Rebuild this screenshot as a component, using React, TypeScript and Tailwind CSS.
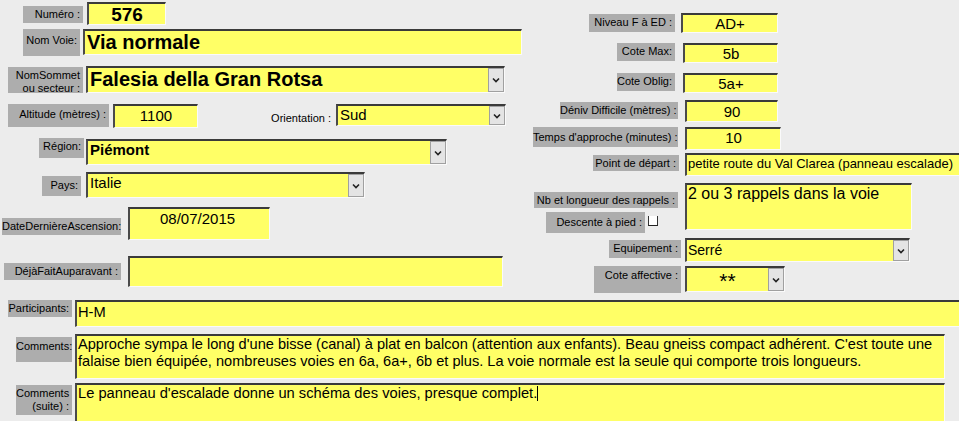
import React from "react";

function Label({ className, children }: { className: string; children: React.ReactNode }) {
  return (
    <div
      className={`shrink-0 bg-[#adadad] text-right whitespace-nowrap text-[11px] leading-[13px] pr-[3px] pt-[2px] text-black ${className}`}
    >
      {children}
    </div>
  );
}

function DropBtn() {
  return (
    <div className="shrink-0 w-[16px] h-full flex items-center justify-center bg-[#e4e4e4] border border-[#a0a0a0]">
      <svg width="8" height="6" viewBox="0 0 8 6">
        <path d="M1 1.5 L4 4.5 L7 1.5" stroke="#222" strokeWidth="1.6" fill="none" />
      </svg>
    </div>
  );
}

function Field({
  className,
  children,
  dropdown,
  inner,
}: {
  className: string;
  children?: React.ReactNode;
  dropdown?: boolean;
  inner?: string;
}) {
  return (
    <div
      className={`shrink-0 flex bg-[#ffff66] border-t-2 border-l-2 border-t-[#3a3a3a] border-l-[#4a4a4a] border-b border-r border-b-[#fafafa] border-r-[#fafafa] ${className}`}
    >
      <div className={`flex-1 min-w-0 overflow-hidden whitespace-nowrap text-black ${inner ?? ""}`}>{children}</div>
      {dropdown && <DropBtn />}
    </div>
  );
}

export default function App() {
  return (
    <div className="w-[959px] h-[421px] overflow-hidden bg-[#ececec] font-['Liberation_Sans',Arial,sans-serif]">
      {/* top part: two columns */}
      <div className="flex h-[300px]">
        {/* left column */}
        <div className="w-[525px] shrink-0 flex flex-col">
          <div className="flex mt-[2px] h-[23px]">
            <Label className="ml-[23px] mt-[4px] w-[60px] h-[17px]">Numéro :</Label>
            <Field className="ml-[4px] w-[79px] h-[23px]" inner="text-center text-[19px] font-bold leading-[20px] pt-[1px]">
              576
            </Field>
          </div>
          <div className="flex mt-[4px] h-[27px]">
            <Label className="ml-[23px] w-[57px] h-[27px] pt-[5px]">Nom Voie:</Label>
            <Field className="ml-[3px] w-[439px] h-[26px]" inner="pl-[2px] text-[20px] font-bold leading-[22px]">
              Via normale
            </Field>
          </div>
          <div className="flex mt-[10px] h-[27px]">
            <Label className="ml-[8px] mt-[1px] w-[75px] h-[26px] leading-[11px] pt-[1px]">
              NomSommet
              <br />
              ou secteur :
            </Label>
            <Field dropdown className="ml-[3px] w-[419px] h-[27px]" inner="pl-[2px] text-[20px] font-bold leading-[23px]">
              Falesia della Gran Rotsa
            </Field>
          </div>
          <div className="flex mt-[11px] h-[24px]">
            <Label className="ml-[8px] w-[101px] h-[23px] pt-[4px]">Altitude (mètres) :</Label>
            <Field className="ml-[4px] w-[85px] h-[24px]" inner="text-center text-[15px] leading-[20px]">
              1100
            </Field>
            <div className="w-[138px] shrink-0 text-right text-[11px] pt-[6px] pr-[5px]">Orientation :</div>
            <Field dropdown className="w-[170px] h-[22px]" inner="pl-[2px] text-[15px] leading-[18px]">
              Sud
            </Field>
          </div>
          <div className="flex mt-[10px] h-[27px]">
            <Label className="ml-[39px] w-[45px] h-[20px]">Région:</Label>
            <Field dropdown className="ml-[2px] mt-[1px] w-[361px] h-[26px]" inner="pl-[2px] text-[15px] font-bold leading-[18px]">
              Piémont
            </Field>
          </div>
          <div className="flex mt-[7px] h-[26px]">
            <Label className="ml-[42px] mt-[4px] w-[39px] h-[20px] pt-[3px]">Pays:</Label>
            <Field dropdown className="ml-[5px] w-[279px] h-[26px]" inner="pl-[2px] text-[15px] leading-[18px]">
              Italie
            </Field>
          </div>
          <div className="flex mt-[9px] h-[33px]">
            <Label className="ml-[2px] mt-[11px] w-[119px] h-[17px]">DateDernièreAscension:</Label>
            <Field className="ml-[7px] w-[142px] h-[33px]" inner="pl-[30px] text-[15px] leading-[18px] pt-[1px]">
              08/07/2015
            </Field>
          </div>
          <div className="flex mt-[16px] h-[31px]">
            <Label className="ml-[4px] mt-[7px] w-[117px] h-[17px]">DéjàFaitAuparavant :</Label>
            <Field className="ml-[7px] w-[375px] h-[31px]" />
          </div>
        </div>

        {/* right column */}
        <div className="flex-1 flex flex-col">
          <div className="flex mt-[13px] h-[20px]">
            <Label className="ml-[64px] mt-[1px] w-[86px] h-[18px]">Niveau F à ED :</Label>
            <Field className="ml-[6px] w-[97px] h-[20px]" inner="text-center text-[15px] leading-[17px]">
              AD+
            </Field>
          </div>
          <div className="flex mt-[10px] h-[20px]">
            <Label className="ml-[92px] w-[58px] h-[18px]">Cote Max:</Label>
            <Field className="ml-[8px] w-[95px] h-[20px]" inner="text-center text-[15px] leading-[17px]">
              5b
            </Field>
          </div>
          <div className="flex mt-[10px] h-[20px]">
            <Label className="ml-[92px] w-[58px] h-[18px]">Cote Oblig:</Label>
            <Field className="ml-[8px] w-[95px] h-[20px]" inner="text-center text-[15px] leading-[17px]">
              5a+
            </Field>
          </div>
          <div className="flex mt-[7px] h-[22px]">
            <Label className="ml-[35px] mt-[2px] w-[118px] h-[17px] pt-[1px]">Déniv Difficile (mètres) :</Label>
            <Field className="ml-[7px] w-[93px] h-[22px]" inner="text-center text-[15px] leading-[19px]">
              90
            </Field>
          </div>
          <div className="flex mt-[5px] h-[23px]">
            <Label className="ml-[8px] w-[145px] h-[20px] pt-[4px] pr-[2px]">Temps d'approche (minutes) :</Label>
            <Field className="ml-[7px] w-[96px] h-[23px]" inner="text-center text-[15px] leading-[17px]">
              10
            </Field>
          </div>
          <div className="flex mt-[3px] h-[23px]">
            <Label className="ml-[68px] mt-[2px] w-[86px] h-[16px] pt-[1px]">Point de départ :</Label>
            <Field className="ml-[6px] w-[290px] h-[23px]" inner="pl-[1px] text-[13px] leading-[18px]">
              petite route du Val Clarea (panneau escalade)
            </Field>
          </div>
          <div className="flex mt-[7px] h-[47px]">
            <div className="w-[153px] shrink-0 flex flex-col">
              <Label className="ml-[9px] mt-[9px] w-[144px] h-[16px] pt-[2px]">Nb et longueur des rappels :</Label>
              <div className="flex mt-[4px]">
                <Label className="ml-[21px] w-[99px] h-[21px] pt-[4px]">Descente à pied :</Label>
                <div className="ml-[3px] mt-[4px] w-[10px] h-[10px] bg-white border-l border-b border-r border-l-[#333] border-b-[#222] border-r-[#333]" />
              </div>
            </div>
            <Field className="ml-[7px] w-[227px] h-[47px]" inner="pl-[1px] text-[16px] leading-[17px]">
              2 ou 3 rappels dans la voie
            </Field>
          </div>
          <div className="flex mt-[8px] h-[24px]">
            <Label className="ml-[84px] mt-[2px] w-[72px] h-[18px] pt-[2px]">Equipement :</Label>
            <Field dropdown className="ml-[4px] w-[225px] h-[24px]" inner="pl-[1px] text-[14px] leading-[20px]">
              Serré
            </Field>
          </div>
          <div className="flex mt-[4px] h-[27px]">
            <Label className="ml-[69px] w-[87px] h-[27px] pt-[3px]">Cote affective :</Label>
            <Field dropdown className="ml-[4px] w-[100px] h-[26px]" inner="text-center text-[21px] leading-[24px] pt-[1px]">
              **
            </Field>
          </div>
        </div>
      </div>

      {/* bottom rows */}
      <div className="flex h-[27px]">
        <Label className="ml-[8px] w-[64px] h-[17px] pt-[1px]">Participants:</Label>
        <Field className="ml-[3px] w-[900px] h-[27px]" inner="pl-[1px] text-[14.7px] leading-[19px] pt-[1px]">
          H-M
        </Field>
      </div>
      <div className="flex mt-[7px] h-[45px]">
        <Label className="ml-[16px] mt-[3px] w-[56px] h-[25px] pt-[3px]">Comments:</Label>
        <Field className="ml-[3px] w-[870px] h-[45px]" inner="pl-[1px] text-[14.6px] leading-[17px]">
          Approche sympa le long d'une bisse (canal) à plat en balcon (attention aux enfants). Beau gneiss compact
          adhérent. C'est toute une
          <br />
          falaise bien équipée, nombreuses voies en 6a, 6a+, 6b et plus. La voie normale est la seule qui comporte
          trois longueurs.
        </Field>
      </div>
      <div className="flex mt-[4px] h-[40px]">
        <Label className="ml-[16px] mt-[2px] w-[56px] h-[30px] leading-[12px] pt-[2px]">
          Comments
          <br />
          (suite) :
        </Label>
        <Field className="ml-[3px] w-[870px] h-[45px]" inner="pl-[1px] text-[14.7px] leading-[17px]">
          Le panneau d'escalade donne un schéma des voies, presque complet.
          <span className="inline-block w-px h-[15px] bg-black align-[-3px]" />
        </Field>
      </div>
    </div>
  );
}
